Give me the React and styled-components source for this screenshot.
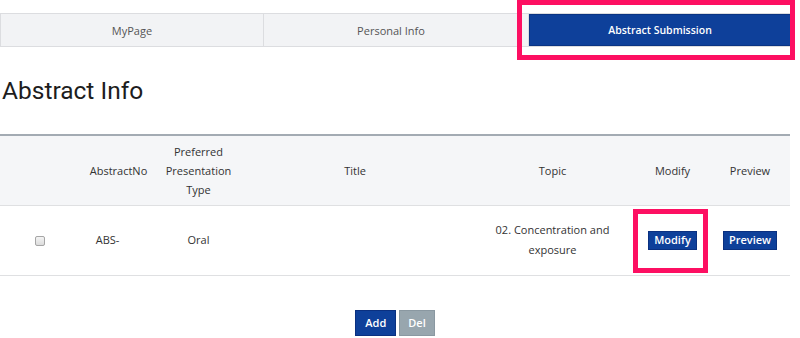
import React from "react";
import styled, { createGlobalStyle } from "styled-components";

const GlobalStyle = createGlobalStyle`
  body {
    margin: 0;
    background: #ffffff;
    font-family: "Open Sans", "Liberation Sans", sans-serif;
    color: #333;
  }
`;

const Page = styled.div`
  width: 790px;
  padding-top: 13px;
`;

const TabBarWrap = styled.div`
  position: relative;
`;

const TabBar = styled.div`
  display: flex;
  border: 1px solid #dcdde0;
  background: #f2f3f5;
  height: 32px;
`;

const Tab = styled.div`
  width: ${(p) => p.w}px;
  flex: none;
  display: flex;
  align-items: center;
  justify-content: center;
  font-size: ${(p) => (p.active ? 10.5 : 11)}px;
  color: ${(p) => (p.active ? "#fff" : "#555")};
  font-weight: ${(p) => (p.active ? 600 : 400)};
  background: ${(p) => (p.active ? "#0e409a" : "transparent")};
  border-left: ${(p) => (p.first ? "none" : "1px solid #dcdde0")};
  margin-left: ${(p) => (p.active ? "10px" : "0")};
  box-shadow: ${(p) => (p.active ? "inset 0 0 0 1px #0a3483" : "none")};
`;

const Highlight = styled.div`
  position: absolute;
  border: 5px solid #fd0f62;
  box-sizing: border-box;
`;

const Heading = styled.h2`
  margin: 29px 0 0 2px;
  font-family: Roboto, "Liberation Sans", sans-serif;
  font-weight: 400;
  font-size: 24.5px;
  line-height: 30px;
  color: #1d1d1d;
`;

const Table = styled.table`
  margin-top: 28px;
  width: 790px;
  border-collapse: collapse;
  table-layout: fixed;
  border-top: 2px solid #a3abb3;
`;

const HeadRow = styled.tr`
  background: #f5f6f8;
  height: 70px;
  border-bottom: 1px solid #dfe0e2;
`;

const Th = styled.th`
  font-weight: 400;
  font-size: 11px;
  line-height: 19px;
  color: #333;
  text-align: center;
  padding: 0 6px;
`;

const BodyRow = styled.tr`
  height: 70px;
  border-bottom: 1px solid #dfe0e2;
`;

const Td = styled.td`
  font-size: 11px;
  line-height: 20px;
  color: #333;
  text-align: center;
  padding: 0 ${(p) => p.pad ?? 6}px;
  position: relative;
`;

const Check = styled.input`
  appearance: none;
  width: 10px;
  height: 10px;
  margin: 0;
  border: 1px solid #a6a6a6;
  border-radius: 2px;
  background: linear-gradient(#f4f4f4, #dcdcdc);
  vertical-align: middle;
`;

const SmallButton = styled.button`
  font-family: "Open Sans", "Liberation Sans", sans-serif;
  font-size: 11px;
  font-weight: 600;
  color: #fff;
  background: #0e409a;
  border: 1px solid #0a3080;
  height: 19px;
  padding: 0 5px;
  line-height: 16px;
  cursor: pointer;
`;

const Actions = styled.div`
  display: flex;
  justify-content: center;
  gap: 3px;
  margin-top: 34px;
`;

const ActionButton = styled.button`
  font-family: "Open Sans", "Liberation Sans", sans-serif;
  font-size: 11px;
  font-weight: 600;
  color: #fff;
  height: 26px;
  padding: 0 ${(p) => (p.gray ? 8 : 9)}px;
  background: ${(p) => (p.gray ? "#98a6ae" : "#0e409a")};
  border: 1px solid ${(p) => (p.gray ? "#8a98a1" : "#0a3080")};
  cursor: pointer;
`;

export default function App() {
  return (
    <Page>
      <GlobalStyle />
      <TabBarWrap>
        <TabBar>
          <Tab first w={262}>MyPage</Tab>
          <Tab w={254}>Personal Info</Tab>
          <Tab active w={262}>Abstract Submission</Tab>
        </TabBar>
        <Highlight style={{ left: 517, top: -13, width: 278, height: 60 }} />
      </TabBarWrap>

      <Heading>Abstract Info</Heading>

      <Table>
        <colgroup>
          <col style={{ width: 80 }} />
          <col style={{ width: 77 }} />
          <col style={{ width: 83 }} />
          <col style={{ width: 230 }} />
          <col style={{ width: 165 }} />
          <col style={{ width: 75 }} />
          <col style={{ width: 80 }} />
        </colgroup>
        <thead>
          <HeadRow>
            <Th></Th>
            <Th>AbstractNo</Th>
            <Th>Preferred Presentation Type</Th>
            <Th>Title</Th>
            <Th>Topic</Th>
            <Th>Modify</Th>
            <Th>Preview</Th>
          </HeadRow>
        </thead>
        <tbody>
          <BodyRow>
            <Td>
              <Check type="checkbox" />
            </Td>
            <Td pad={0} style={{ paddingRight: 22 }}>ABS-</Td>
            <Td>Oral</Td>
            <Td></Td>
            <Td pad={20}>02. Concentration and exposure</Td>
            <Td>
              <SmallButton>Modify</SmallButton>
              <Highlight style={{ left: -2, top: 3, width: 75, height: 64 }} />
            </Td>
            <Td>
              <SmallButton>Preview</SmallButton>
            </Td>
          </BodyRow>
        </tbody>
      </Table>

      <Actions>
        <ActionButton>Add</ActionButton>
        <ActionButton gray>Del</ActionButton>
      </Actions>
    </Page>
  );
}
